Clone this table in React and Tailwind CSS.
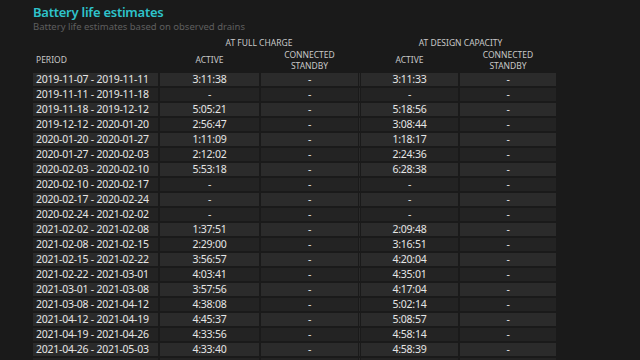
import React from "react";

const rows = [
  ["2019-11-07 - 2019-11-11", "3:11:38", "-", "3:11:33", "-"],
  ["2019-11-11 - 2019-11-18", "-", "-", "-", "-"],
  ["2019-11-18 - 2019-12-12", "5:05:21", "-", "5:18:56", "-"],
  ["2019-12-12 - 2020-01-20", "2:56:47", "-", "3:08:44", "-"],
  ["2020-01-20 - 2020-01-27", "1:11:09", "-", "1:18:17", "-"],
  ["2020-01-27 - 2020-02-03", "2:12:02", "-", "2:24:36", "-"],
  ["2020-02-03 - 2020-02-10", "5:53:18", "-", "6:28:38", "-"],
  ["2020-02-10 - 2020-02-17", "-", "-", "-", "-"],
  ["2020-02-17 - 2020-02-24", "-", "-", "-", "-"],
  ["2020-02-24 - 2021-02-02", "-", "-", "-", "-"],
  ["2021-02-02 - 2021-02-08", "1:37:51", "-", "2:09:48", "-"],
  ["2021-02-08 - 2021-02-15", "2:29:00", "-", "3:16:51", "-"],
  ["2021-02-15 - 2021-02-22", "3:56:57", "-", "4:20:04", "-"],
  ["2021-02-22 - 2021-03-01", "4:03:41", "-", "4:35:01", "-"],
  ["2021-03-01 - 2021-03-08", "3:57:56", "-", "4:17:04", "-"],
  ["2021-03-08 - 2021-04-12", "4:38:08", "-", "5:02:14", "-"],
  ["2021-04-12 - 2021-04-19", "4:45:37", "-", "5:08:57", "-"],
  ["2021-04-19 - 2021-04-26", "4:33:56", "-", "4:58:14", "-"],
  ["2021-04-26 - 2021-05-03", "4:33:40", "-", "4:58:39", "-"],
  // next row only peeks in at the bottom edge
  ["", "", "", "", ""],
];

const Sep = () => <div className="w-px -mx-px self-stretch bg-[#2a2a2a]" />;

function Row({ r, i }) {
  const bg = i % 2 === 0 ? "bg-[#2b2b2b]" : "bg-[#232323]";
  const cell = `${bg} h-[13px] flex items-center justify-center`;
  return (
    <div className="flex gap-[2px] mb-[2px]">
      <div className={`${bg} h-[13px] w-[125px] flex items-center pl-[3px]`}>{r[0]}</div>
      <div className={`${cell} w-[99px]`}>{r[1]}</div>
      <div className={`${cell} w-[97px]`}>{r[2]}</div>
      <Sep />
      <div className={`${cell} w-[97px]`}>{r[3]}</div>
      <div className={`${cell} w-[96px]`}>{r[4]}</div>
    </div>
  );
}

export default function App() {
  return (
    <div className="w-[640px] h-[360px] overflow-hidden bg-[#1a1a1a] pl-[33px] pt-[3px] font-['Noto_Sans','Open_Sans',sans-serif]">
      <h1 className="text-[13px] leading-[18px] font-semibold tracking-[-0.25px] text-[#2ec3cb]">Battery life estimates</h1>
      <p className="text-[9.5px] leading-[12px] text-[#5f5f5f]">Battery life estimates based on observed drains</p>

      {/* group headers */}
      <div className="flex gap-[2px] mt-[4px] text-[8.5px] leading-[11px] text-[#c8c8c8]">
        <div className="w-[125px]" />
        <div className="w-[198px] text-center">AT FULL CHARGE</div>
        <div className="w-[1px]" />
        <div className="w-[195px] text-center">AT DESIGN CAPACITY</div>
      </div>
      <div className="flex gap-[2px] h-[23px] mb-[2px] items-center text-[8.5px] leading-[11px] text-[#c8c8c8]">
        <div className="w-[125px] pl-[3px]">PERIOD</div>
        <div className="w-[99px] text-center">ACTIVE</div>
        <div className="w-[97px] text-center">CONNECTED<br />STANDBY</div>
        <div className="w-px -mx-px" />
        <div className="w-[97px] text-center">ACTIVE</div>
        <div className="w-[96px] text-center">CONNECTED<br />STANDBY</div>
      </div>

      <div className="text-[10.5px] leading-[13px] tracking-[-0.25px] whitespace-nowrap text-[#e6e6e6]">
        {rows.map((r, i) => (
          <Row key={i} r={r} i={i} />
        ))}
      </div>
    </div>
  );
}
